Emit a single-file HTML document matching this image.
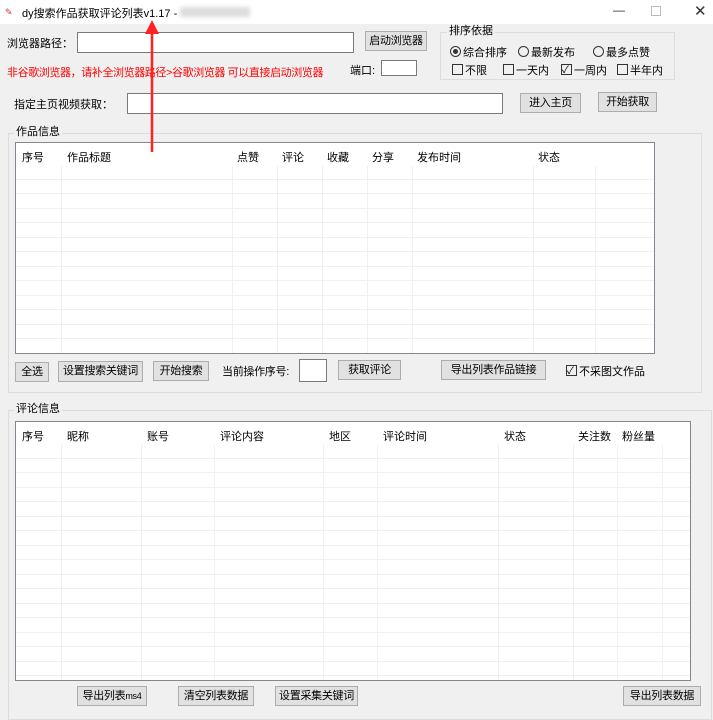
<!DOCTYPE html>
<html><head><meta charset="utf-8"><style>
*{box-sizing:border-box;margin:0;padding:0}
body{width:713px;height:708px;background:#f0f0f0;position:relative;overflow:hidden;font-family:"Liberation Sans","Noto Sans CJK SC",sans-serif;font-size:11px;color:#000}
.a{position:absolute;white-space:nowrap}
.in{position:absolute;background:#fff;border:1px solid #7a7a7a}
.btn{position:absolute;background:#e1e1e1;border:1px solid #adadad;text-align:center;font-size:11px;line-height:18px;white-space:nowrap;overflow:hidden;letter-spacing:-0.3px}
.grp{position:absolute;border:1px solid #dcdcdc}
.gl{position:absolute;background:#f0f0f0;padding:0 2px;line-height:14px}
.tbl{position:absolute;background:#fff;border:1px solid #828790;overflow:hidden}
.vl{position:absolute;top:0;bottom:0;width:1px;background:#f0f0f0}
.hl{position:absolute;left:0;right:0;height:1px;background:#f0f0f0}
.th{position:absolute;top:6px;white-space:nowrap}
.rb{display:inline-block;width:11px;height:11px;border:1px solid #333;border-radius:50%;vertical-align:-1px;margin-right:2px;position:relative}
.cb{display:inline-block;width:11px;height:11px;border:1px solid #333;vertical-align:-1px;margin-right:2px;position:relative}
</style></head><body>
<div class="a" style="left:0;top:0;width:713px;height:24px;background:#fff"></div>
<div class="a" style="left:5px;top:7px;color:#c33;font-size:9px">✎</div>
<div class="a" style="left:22px;top:5px;font-size:11px">dy搜索作品获取评论列表v1.17 -</div>
<div class="a" style="left:180px;top:7px;width:70px;height:10px;background:#ddd;filter:blur(2px)"></div>
<div class="a" style="left:613px;top:3px;font-size:12px;color:#333">—</div>
<div class="a" style="left:651px;top:6px;width:10px;height:10px;border:1px solid #bbb"></div>
<div class="a" style="left:694px;top:2px;font-size:15px;color:#333">✕</div>

<div class="a" style="left:7px;top:35px">浏览器路径：</div>
<div class="in" style="left:77px;top:32px;width:277px;height:21px"></div>
<div class="btn" style="left:365px;top:31px;width:62px;height:20px">启动浏览器</div>
<div class="grp" style="left:440px;top:32px;width:235px;height:48px"></div>
<div class="gl" style="left:447px;top:24px">排序依据</div>
<div class="a" style="left:450px;top:44px"><span class="rb"><span style="position:absolute;left:2px;top:2px;width:5px;height:5px;border-radius:50%;background:#333"></span></span>综合排序</div>
<div class="a" style="left:518px;top:44px"><span class="rb"></span>最新发布</div>
<div class="a" style="left:593px;top:44px"><span class="rb"></span>最多点赞</div>
<div class="a" style="left:452px;top:62px"><span class="cb"></span>不限</div>
<div class="a" style="left:503px;top:62px"><span class="cb"></span>一天内</div>
<div class="a" style="left:561px;top:62px"><span class="cb"><span style="position:absolute;left:0;top:-4px;font-size:10px">✓</span></span>一周内</div>
<div class="a" style="left:617px;top:62px"><span class="cb"></span>半年内</div>
<div class="a" style="left:7px;top:64px;color:#f00;letter-spacing:-0.4px">非谷歌浏览器，请补全浏览器路径&gt;谷歌浏览器 可以直接启动浏览器</div>
<div class="a" style="left:350px;top:62px">端口:</div>
<div class="in" style="left:381px;top:60px;width:36px;height:16px"></div>

<div class="a" style="left:14px;top:96px">指定主页视频获取：</div>
<div class="in" style="left:127px;top:93px;width:376px;height:21px"></div>
<div class="btn" style="left:520px;top:93px;width:61px;height:20px">进入主页</div>
<div class="btn" style="left:598px;top:92px;width:59px;height:20px">开始获取</div>

<div class="grp" style="left:8px;top:133px;width:694px;height:260px"></div>
<div class="gl" style="left:14px;top:125px">作品信息</div>
<div class="tbl" style="left:15px;top:142px;width:640px;height:212px">
<div class="vl" style="left:45px"></div><div class="vl" style="left:216px"></div><div class="vl" style="left:261px"></div><div class="vl" style="left:306px"></div><div class="vl" style="left:351px"></div><div class="vl" style="left:396px"></div><div class="vl" style="left:517px"></div><div class="vl" style="left:579px"></div>
<div class="hl" style="top:36px"></div><div class="hl" style="top:50px"></div><div class="hl" style="top:65px"></div><div class="hl" style="top:79px"></div><div class="hl" style="top:94px"></div><div class="hl" style="top:108px"></div><div class="hl" style="top:123px"></div><div class="hl" style="top:137px"></div><div class="hl" style="top:152px"></div><div class="hl" style="top:166px"></div><div class="hl" style="top:181px"></div><div class="hl" style="top:195px"></div>
<div class="a" style="left:0;top:0;width:640px;height:23px;background:#fff"></div>
<div class="th" style="left:6px">序号</div><div class="th" style="left:51px">作品标题</div><div class="th" style="left:221px">点赞</div><div class="th" style="left:266px">评论</div><div class="th" style="left:311px">收藏</div><div class="th" style="left:356px">分享</div><div class="th" style="left:401px">发布时间</div><div class="th" style="left:522px">状态</div>
</div>
<div class="btn" style="left:15px;top:362px;width:34px;height:20px">全选</div>
<div class="btn" style="left:58px;top:361px;width:85px;height:21px">设置搜索关键词</div>
<div class="btn" style="left:153px;top:361px;width:56px;height:20px">开始搜索</div>
<div class="a" style="left:222px;top:363px;letter-spacing:-0.3px">当前操作序号:</div>
<div class="in" style="left:299px;top:359px;width:28px;height:23px"></div>
<div class="btn" style="left:338px;top:360px;width:63px;height:20px">获取评论</div>
<div class="btn" style="left:441px;top:360px;width:105px;height:20px">导出列表作品链接</div>
<div class="a" style="left:566px;top:363px"><span class="cb"><span style="position:absolute;left:0;top:-4px;font-size:10px">✓</span></span>不采图文作品</div>

<div class="grp" style="left:8px;top:410px;width:704px;height:310px"></div>
<div class="gl" style="left:14px;top:402px">评论信息</div>
<div class="tbl" style="left:15px;top:421px;width:676px;height:260px">
<div class="vl" style="left:45px"></div><div class="vl" style="left:125px"></div><div class="vl" style="left:198px"></div><div class="vl" style="left:307px"></div><div class="vl" style="left:361px"></div><div class="vl" style="left:482px"></div><div class="vl" style="left:557px"></div><div class="vl" style="left:601px"></div><div class="vl" style="left:646px"></div>
<div class="hl" style="top:36px"></div><div class="hl" style="top:50px"></div><div class="hl" style="top:65px"></div><div class="hl" style="top:79px"></div><div class="hl" style="top:94px"></div><div class="hl" style="top:108px"></div><div class="hl" style="top:123px"></div><div class="hl" style="top:137px"></div><div class="hl" style="top:152px"></div><div class="hl" style="top:166px"></div><div class="hl" style="top:181px"></div><div class="hl" style="top:195px"></div><div class="hl" style="top:210px"></div><div class="hl" style="top:224px"></div><div class="hl" style="top:239px"></div><div class="hl" style="top:253px"></div>
<div class="a" style="left:0;top:0;width:676px;height:23px;background:#fff"></div>
<div class="th" style="left:6px">序号</div><div class="th" style="left:51px">昵称</div><div class="th" style="left:131px">账号</div><div class="th" style="left:204px">评论内容</div><div class="th" style="left:313px">地区</div><div class="th" style="left:367px">评论时间</div><div class="th" style="left:488px">状态</div><div class="th" style="left:562px">关注数</div><div class="th" style="left:606px">粉丝量</div>
</div>
<div class="btn" style="left:77px;top:686px;width:70px;height:20px">导出列表<span style="font-size:9px">ms4</span></div>
<div class="btn" style="left:178px;top:686px;width:76px;height:20px">清空列表数据</div>
<div class="btn" style="left:275px;top:686px;width:83px;height:20px">设置采集关键词</div>
<div class="btn" style="left:623px;top:686px;width:78px;height:20px">导出列表数据</div>

<svg class="a" style="left:0;top:0" width="713" height="708"><line x1="152" y1="32" x2="152" y2="152" stroke="#f22" stroke-width="2.5"/><polygon points="152,20 145,34 159,34" fill="#f22"/></svg>
</body></html>
